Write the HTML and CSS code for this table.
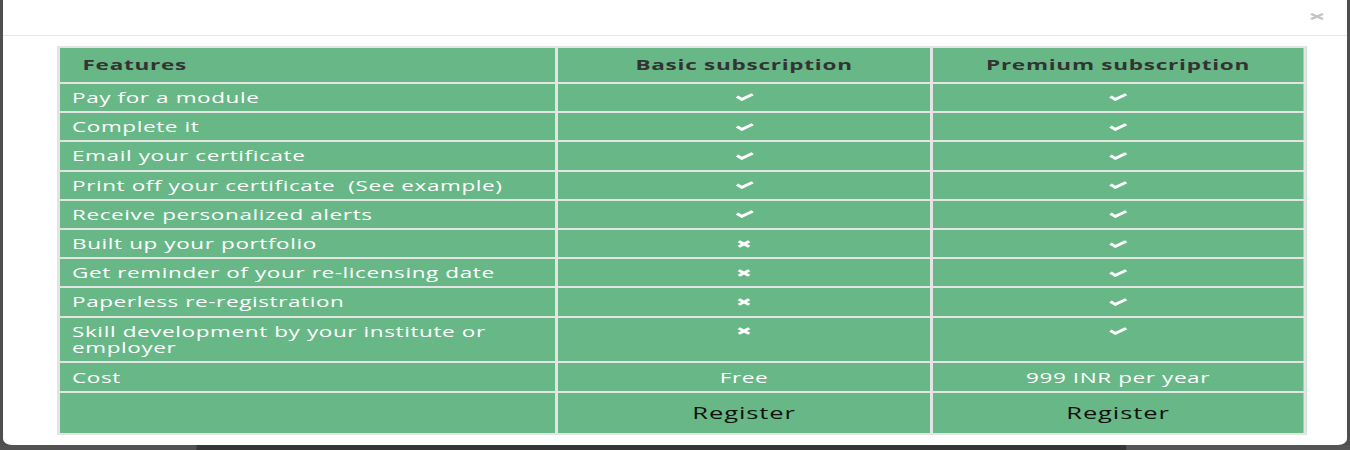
FILE: index.html
```html
<!DOCTYPE html>
<html lang="en">
<head>
<meta charset="utf-8">
<title>Subscription plans</title>
<link rel="stylesheet" href="styles.css">
</head>
<body>
<div class="stage">
  <div class="modal">
    <div class="modal-header">
      <button class="close" aria-label="Close">
        <svg width="10" height="7" viewBox="0 0 10 7"><path d="M1 0.8 L9 6.2 M9 0.8 L1 6.2" stroke="#c4c4c4" stroke-width="2" fill="none"/></svg>
      </button>
    </div>
    <div class="modal-body">
      <table class="plans">
        <colgroup><col class="c-feat"><col class="c-plan"><col class="c-plan"></colgroup>
        <thead>
          <tr><th class="feat">Features</th><th>Basic subscription</th><th>Premium subscription</th></tr>
        </thead>
        <tbody>
          <tr><td>Pay for a module</td><td class="mid"><i class="ok"></i></td><td class="mid"><i class="ok"></i></td></tr>
          <tr><td>Complete it</td><td class="mid"><i class="ok"></i></td><td class="mid"><i class="ok"></i></td></tr>
          <tr><td>Email your certificate</td><td class="mid"><i class="ok"></i></td><td class="mid"><i class="ok"></i></td></tr>
          <tr><td>Print off your certificate&nbsp; (See example)</td><td class="mid"><i class="ok"></i></td><td class="mid"><i class="ok"></i></td></tr>
          <tr><td>Receive personalized alerts</td><td class="mid"><i class="ok"></i></td><td class="mid"><i class="ok"></i></td></tr>
          <tr><td>Built up your portfolio</td><td class="mid"><i class="no"></i></td><td class="mid"><i class="ok"></i></td></tr>
          <tr><td>Get reminder of your re-licensing date</td><td class="mid"><i class="no"></i></td><td class="mid"><i class="ok"></i></td></tr>
          <tr><td>Paperless re-registration</td><td class="mid"><i class="no"></i></td><td class="mid"><i class="ok"></i></td></tr>
          <tr><td>Skill development by your institute or employer</td><td class="mid"><i class="no"></i></td><td class="mid"><i class="ok"></i></td></tr>
          <tr class="cost"><td>Cost</td><td class="mid">Free</td><td class="mid">999 INR per year</td></tr>
          <tr class="reg"><td></td><td class="mid">Register</td><td class="mid">Register</td></tr>
        </tbody>
      </table>
    </div>
  </div>
  <div class="peek">
    <div class="peek-a"></div>
    <div class="peek-b"></div>
    <div class="peek-c"></div>
  </div>
</div>
</body>
</html>
```

FILE: styles.css
```css
html, body {
  margin: 0;
  padding: 0;
}
body {
  background: #4f4f4f;
  width: 1350px;
  height: 450px;
  overflow: hidden;
  font-family: "Open Sans", "DejaVu Sans", sans-serif;
}
.stage {
  width: 900px;
  height: 450px;
  transform: scaleX(1.5);
  transform-origin: 0 0;
  display: flex;
  flex-direction: column;
}
.modal {
  margin-left: 2px;
  width: 896px;
  height: 445px;
  background: #fff;
  border-radius: 0 0 6px 6px;
  box-sizing: border-box;
  display: flex;
  flex-direction: column;
}
.modal-header {
  height: 35px;
  border-bottom: 1px solid #e6e6e6;
  display: flex;
  justify-content: flex-end;
  align-items: flex-start;
  padding-right: 15px;
}
.close {
  border: 0;
  background: none;
  padding: 0;
  margin-top: 13px;
  width: 10px;
  height: 7px;
  display: flex;
}
.modal-body {
  padding: 10px 25px 0 36px;
}
.plans {
  width: 833px;
  border-collapse: collapse;
  table-layout: fixed;
  background: #67b886;
  font-size: 15px;
  letter-spacing: 0.4px;
  line-height: 16.2px;
}
.c-feat { width: 40%; }
.c-plan { width: 30%; }
.plans th, .plans td {
  border: 2px solid #e4e4e4;
}
.plans th {
  color: #333;
  font-weight: 700;
  letter-spacing: 0.5px;
  text-align: center;
  padding: 8px 8px 10px;
  line-height: 16px;
}
.plans th.feat {
  text-align: left;
  padding-left: 15px;
}
.plans td {
  color: #fff;
  padding: 5px 8px 6px;
  vertical-align: top;
}
.plans td.mid {
  text-align: center;
}
.plans tr.cost td {
  padding: 6px 8px 6px;
}
.plans tr.reg td {
  color: #111;
  font-size: 17px;
  letter-spacing: 0.6px;
  line-height: 20px;
  padding: 10px 8px 10px;
}
.ok, .no {
  display: inline-block;
  vertical-align: middle;
  margin-top: -3px;
}
.ok {
  width: 13px;
  height: 8px;
  background: url("data:image/svg+xml,%3Csvg xmlns='http://www.w3.org/2000/svg' viewBox='0 0 13 8'%3E%3Cpath d='M1.3 3.6 L4.6 6.4 L11.8 1.3' stroke='white' stroke-width='2.6' fill='none' stroke-linejoin='miter'/%3E%3C/svg%3E") no-repeat center / contain;
}
.no {
  width: 10px;
  height: 8px;
  background: url("data:image/svg+xml,%3Csvg xmlns='http://www.w3.org/2000/svg' viewBox='0 0 10 8'%3E%3Cpath d='M1.5 1.2 L8.5 6.8 M8.5 1.2 L1.5 6.8' stroke='white' stroke-width='2.4' fill='none'/%3E%3C/svg%3E") no-repeat center / contain;
}
.peek {
  flex: 1;
  display: flex;
}
.peek-a {
  width: 131px;
  background: #525252;
}
.peek-b {
  width: 620px;
  background: #363636;
}
.peek-c {
  flex: 1;
  background: #555;
}
```
